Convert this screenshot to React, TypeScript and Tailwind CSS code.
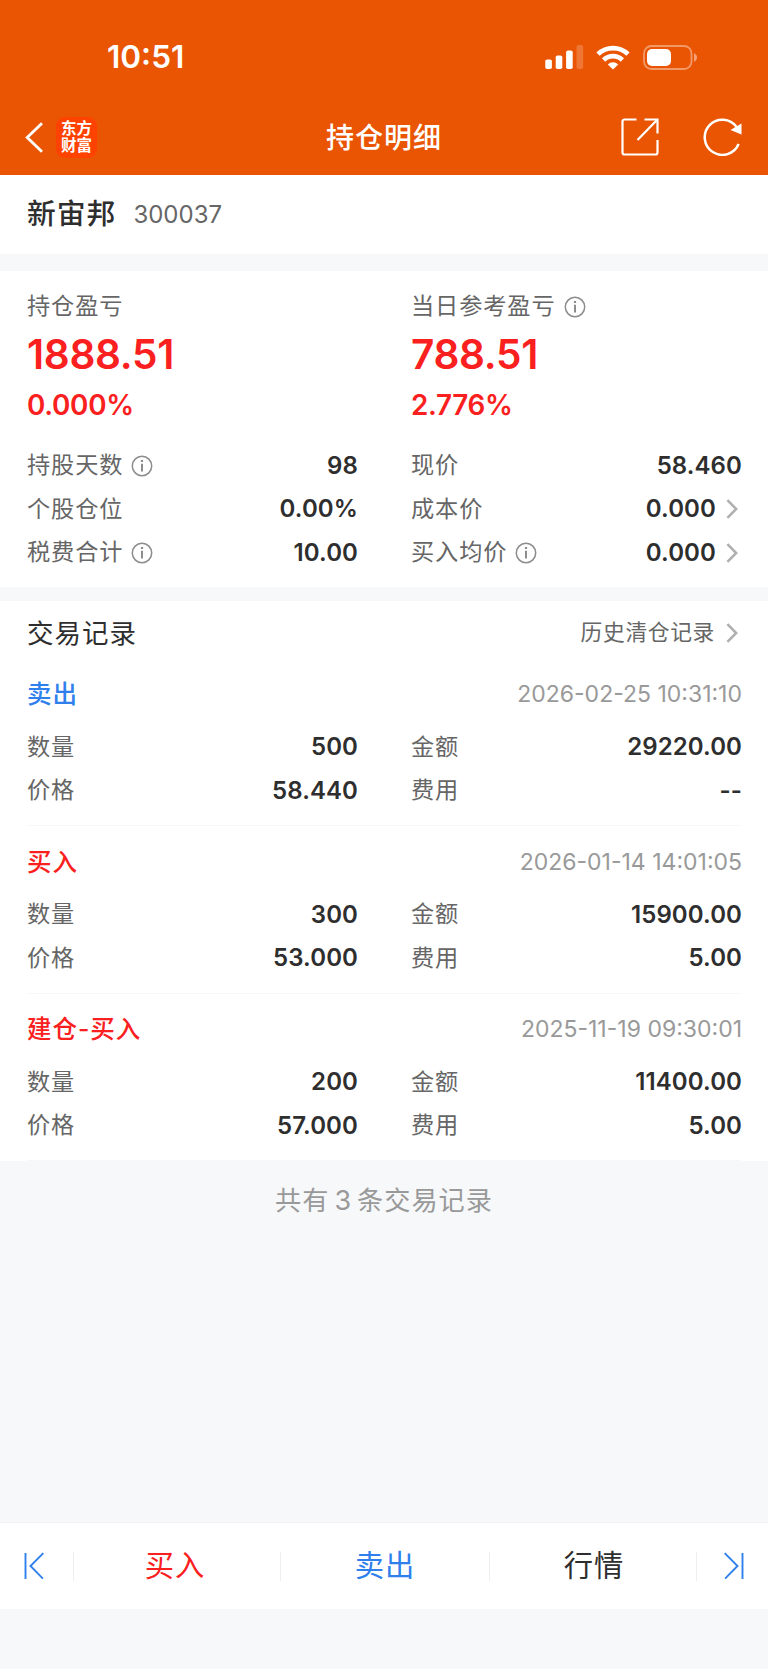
import type { ReactNode } from 'react';

type Trade = {
  type: string;
  color: string;
  time: string;
  count: string;
  amount: string;
  price: string;
  fee: string;
};

const trades: Trade[] = [
  { type: '卖出', color: 'text-[#2f80ed]', time: '2026-02-25 10:31:10', count: '500', amount: '29220.00', price: '58.440', fee: '--' },
  { type: '买入', color: 'text-[#fa2020]', time: '2026-01-14 14:01:05', count: '300', amount: '15900.00', price: '53.000', fee: '5.00' },
  { type: '建仓-买入', color: 'text-[#fa2020]', time: '2025-11-19 09:30:01', count: '200', amount: '11400.00', price: '57.000', fee: '5.00' },
];

const InfoIcon = () => (
  <svg className="ml-2 h-[22px] w-[22px] text-[#8c8c8c]" viewBox="0 0 22 22" fill="none" stroke="currentColor">
    <circle cx="11" cy="11" r="9.7" strokeWidth="1.5" />
    <path d="M11 8.8v7.8" strokeWidth="2" />
    <path d="M11 5v2" strokeWidth="2.2" />
  </svg>
);

const Chevron = () => (
  <svg className="ml-[11px] mr-[3px] h-5 w-3" viewBox="0 0 12 20" fill="none" stroke="#b0b0b0" strokeWidth="2.6">
    <path d="M1.4 1.2 10.2 10l-8.8 8.8" />
  </svg>
);

// Status bar: clock, signal, wifi, battery
const StatusBar = () => (
  <div className="flex h-[102px] items-center justify-between pl-[107px] pr-[70px] pt-[12px]">
    <span className="text-[31.5px] font-semibold leading-none">10:51</span>
    <div className="flex items-center">
      <svg className="h-6 w-[39px]" viewBox="0 0 39 24" fill="#fff">
        <rect x="0.3" y="14.5" width="6.6" height="9.5" rx="1.8" />
        <rect x="10.7" y="10.5" width="6.6" height="13.5" rx="1.8" />
        <rect x="21.1" y="5.5" width="6.6" height="18.5" rx="1.8" />
        <rect x="31.5" y="0" width="6.6" height="24" rx="1.8" opacity="0.2" />
      </svg>
      <svg className="ml-3 h-[25px] w-[34px]" viewBox="0 0 34 25" fill="none" stroke="#fff" strokeWidth="4.6">
        <path d="M2 9.2a21.5 21.5 0 0 1 30 0" />
        <path d="M7.6 15a13.4 13.4 0 0 1 18.8 0" />
        <path d="M17 24.6 11.8 19.4a7.4 7.4 0 0 1 10.4 0z" fill="#fff" stroke="none" />
      </svg>
      <svg className="ml-[13px] h-[25px] w-[55px]" viewBox="0 0 55 25">
        <rect x="1" y="1" width="47.5" height="23" rx="7.5" fill="none" stroke="#fff" strokeWidth="1.8" opacity="0.4" />
        <rect x="4" y="4" width="24" height="17" rx="5" fill="#fff" />
        <path d="M51 8.3c4 1.2 4 7.2 0 8.4z" fill="#fff" opacity="0.45" />
      </svg>
    </div>
  </div>
);

const NavBar = () => (
  <div className="grid h-[73px] grid-cols-3 items-center pb-[3px]">
    <div className="flex items-center pl-[25px]">
      <svg className="h-[31px] w-[18px]" viewBox="0 0 18 31" fill="none" stroke="#fff" strokeWidth="2.8">
        <path d="M17 1.2 2.2 15.5 17 29.8" />
      </svg>
      <div className="ml-[13px] flex h-[41px] w-[41px] flex-col items-center justify-center rounded-[9px] bg-[#ff4200] text-[15.5px] font-bold leading-[17px]">
        <span>东方</span>
        <span>财富</span>
      </div>
    </div>
    <h1 className="pt-px text-center text-[28px] font-medium leading-none tracking-[1px]">持仓明细</h1>
    <div className="flex items-center justify-end gap-[44px] pr-[26px]">
      <svg className="h-[38px] w-[38px]" viewBox="0 0 38 38" fill="none" stroke="#fff" strokeWidth="2.2">
        <path d="M15.5 1.5H3.5a2 2 0 0 0-2 2v31a2 2 0 0 0 2 2h31a2 2 0 0 0 2-2V22" />
        <path d="M23.5 1.5h13v14" />
        <path d="M36 2 16.5 22" />
      </svg>
      <svg className="h-[38px] w-[39px]" viewBox="0 0 39 38" fill="none" stroke="#fff" strokeWidth="2.5">
        <path d="M35.6 26A17.6 17.6 0 1 1 33.6 9" />
        <path d="M38.5 5.5v11L27.5 12z" fill="#fff" stroke="none" />
      </svg>
    </div>
  </div>
);

type FieldProps = { label: string; value: string; info?: boolean; link?: boolean };

const Field = ({ label, value, info, link }: FieldProps) => (
  <div className="flex h-[43.6px] items-center leading-none">
    <span className="text-[23.2px] tracking-[0.9px] text-[#666]">{label}</span>
    {info && <InfoIcon />}
    <span className="-mr-px ml-auto text-[24px] font-semibold tracking-[0.1px] text-[#2e2e2e]">{value}</span>
    {link && <Chevron />}
  </div>
);

type ProfitProps = { label: ReactNode; value: string; percent: string };

const Profit = ({ label, value, percent }: ProfitProps) => (
  <div className="leading-none text-[#fa2020]">
    <div className="flex h-[30px] items-center text-[23.2px] tracking-[0.9px] text-[#666]">{label}</div>
    <div className="mt-[8px] flex h-[50px] items-center text-[40.5px] font-semibold tracking-[-0.3px]">{value}</div>
    <div className="mt-[9px] flex h-[34px] items-center text-[27.8px] font-semibold tracking-[-0.3px]">{percent}</div>
  </div>
);

const TradeItem = ({ trade }: { trade: Trade }) => (
  <div className="h-[167.5px] border-b-[1.5px] border-[#f7f7f8] pt-[16px]">
    <div className="flex h-[40px] items-center justify-between leading-none">
      <span className={`text-[24.5px] font-medium tracking-[1px] ${trade.color}`}>{trade.type}</span>
      <span className="-mr-px text-[23px] text-[#999]">{trade.time}</span>
    </div>
    <div className="mt-[11px] grid grid-cols-2 gap-x-[54px]">
      <Field label="数量" value={trade.count} />
      <Field label="金额" value={trade.amount} />
      <Field label="价格" value={trade.price} />
      <Field label="费用" value={trade.fee} />
    </div>
  </div>
);

const Divider = () => <div className="h-[29px] w-px bg-[#eeeef0]" />;

export default function App() {
  return (
    <div className="flex h-[1669px] w-[768px] flex-col overflow-hidden bg-[#f7f8fa] font-['Inter','Noto_Sans_CJK_SC',sans-serif]">
      <header className="h-[175px] shrink-0 bg-[#ea5504] text-white">
        <StatusBar />
        <NavBar />
      </header>

      <section className="flex h-[79px] shrink-0 items-center bg-white px-[27px] leading-none">
        <span className="text-[28.8px] font-medium tracking-[1px] text-[#2e2e2e]">新宙邦</span>
        <span className="ml-[17px] text-[24px] text-[#666]">300037</span>
      </section>

      <section className="mt-[17px] h-[316px] shrink-0 bg-white px-[27px] pt-[21px]">
        <div className="grid grid-cols-2 gap-x-[54px]">
          <Profit label="持仓盈亏" value="1888.51" percent="0.000%" />
          <Profit label={<>当日参考盈亏<InfoIcon /></>} value="788.51" percent="2.776%" />
        </div>
        <div className="mt-[21px] grid grid-cols-2 gap-x-[54px]">
          <Field label="持股天数" value="98" info />
          <Field label="现价" value="58.460" />
          <Field label="个股仓位" value="0.00%" />
          <Field label="成本价" value="0.000" link />
          <Field label="税费合计" value="10.00" info />
          <Field label="买入均价" value="0.000" info link />
        </div>
      </section>

      <section className="mt-[14px] h-[560px] shrink-0 bg-white px-[27px]">
        <div className="flex h-[57.5px] items-center justify-between pt-[7px] leading-none">
          <h2 className="text-[26.5px] tracking-[1px] text-[#2e2e2e]">交易记录</h2>
          <div className="flex items-center text-[21.8px] tracking-[0.6px] text-[#666]">
            历史清仓记录
            <Chevron />
          </div>
        </div>
        {trades.map((trade) => (
          <TradeItem key={trade.time} trade={trade} />
        ))}
      </section>

      <p className="mt-[26px] text-center text-[26.2px] leading-[28px] tracking-[1px] text-[#999]">
        共有<span className="mx-[5px] text-[27px]">3</span>条交易记录
      </p>

      <nav className="mb-[60px] mt-auto flex h-[87px] shrink-0 items-center border-t border-[#f1f1f3] bg-white text-[29.3px] leading-none tracking-[1px]">
        <div className="flex w-[73px] pl-[24px]">
          <svg className="h-7 w-5" viewBox="0 0 20 28" fill="none" stroke="#2f80ed" strokeWidth="1.9">
            <path d="M1.5 1v26M19.3 1.2 6.5 14l12.4 12.6" />
          </svg>
        </div>
        <Divider />
        <button className="w-[206px] pr-1 text-[#fa2020]">买入</button>
        <Divider />
        <button className="w-[208px] text-[#2f80ed]">卖出</button>
        <Divider />
        <button className="w-[206px] pl-0.5 text-[#2e2e2e]">行情</button>
        <Divider />
        <div className="flex flex-1 justify-end pr-[24px]">
          <svg className="h-7 w-5" viewBox="0 0 20 28" fill="none" stroke="#2f80ed" strokeWidth="1.9">
            <path d="M18.5 1v26M.7 1.2 13.5 14 1.1 26.6" />
          </svg>
        </div>
      </nav>
    </div>
  );
}
